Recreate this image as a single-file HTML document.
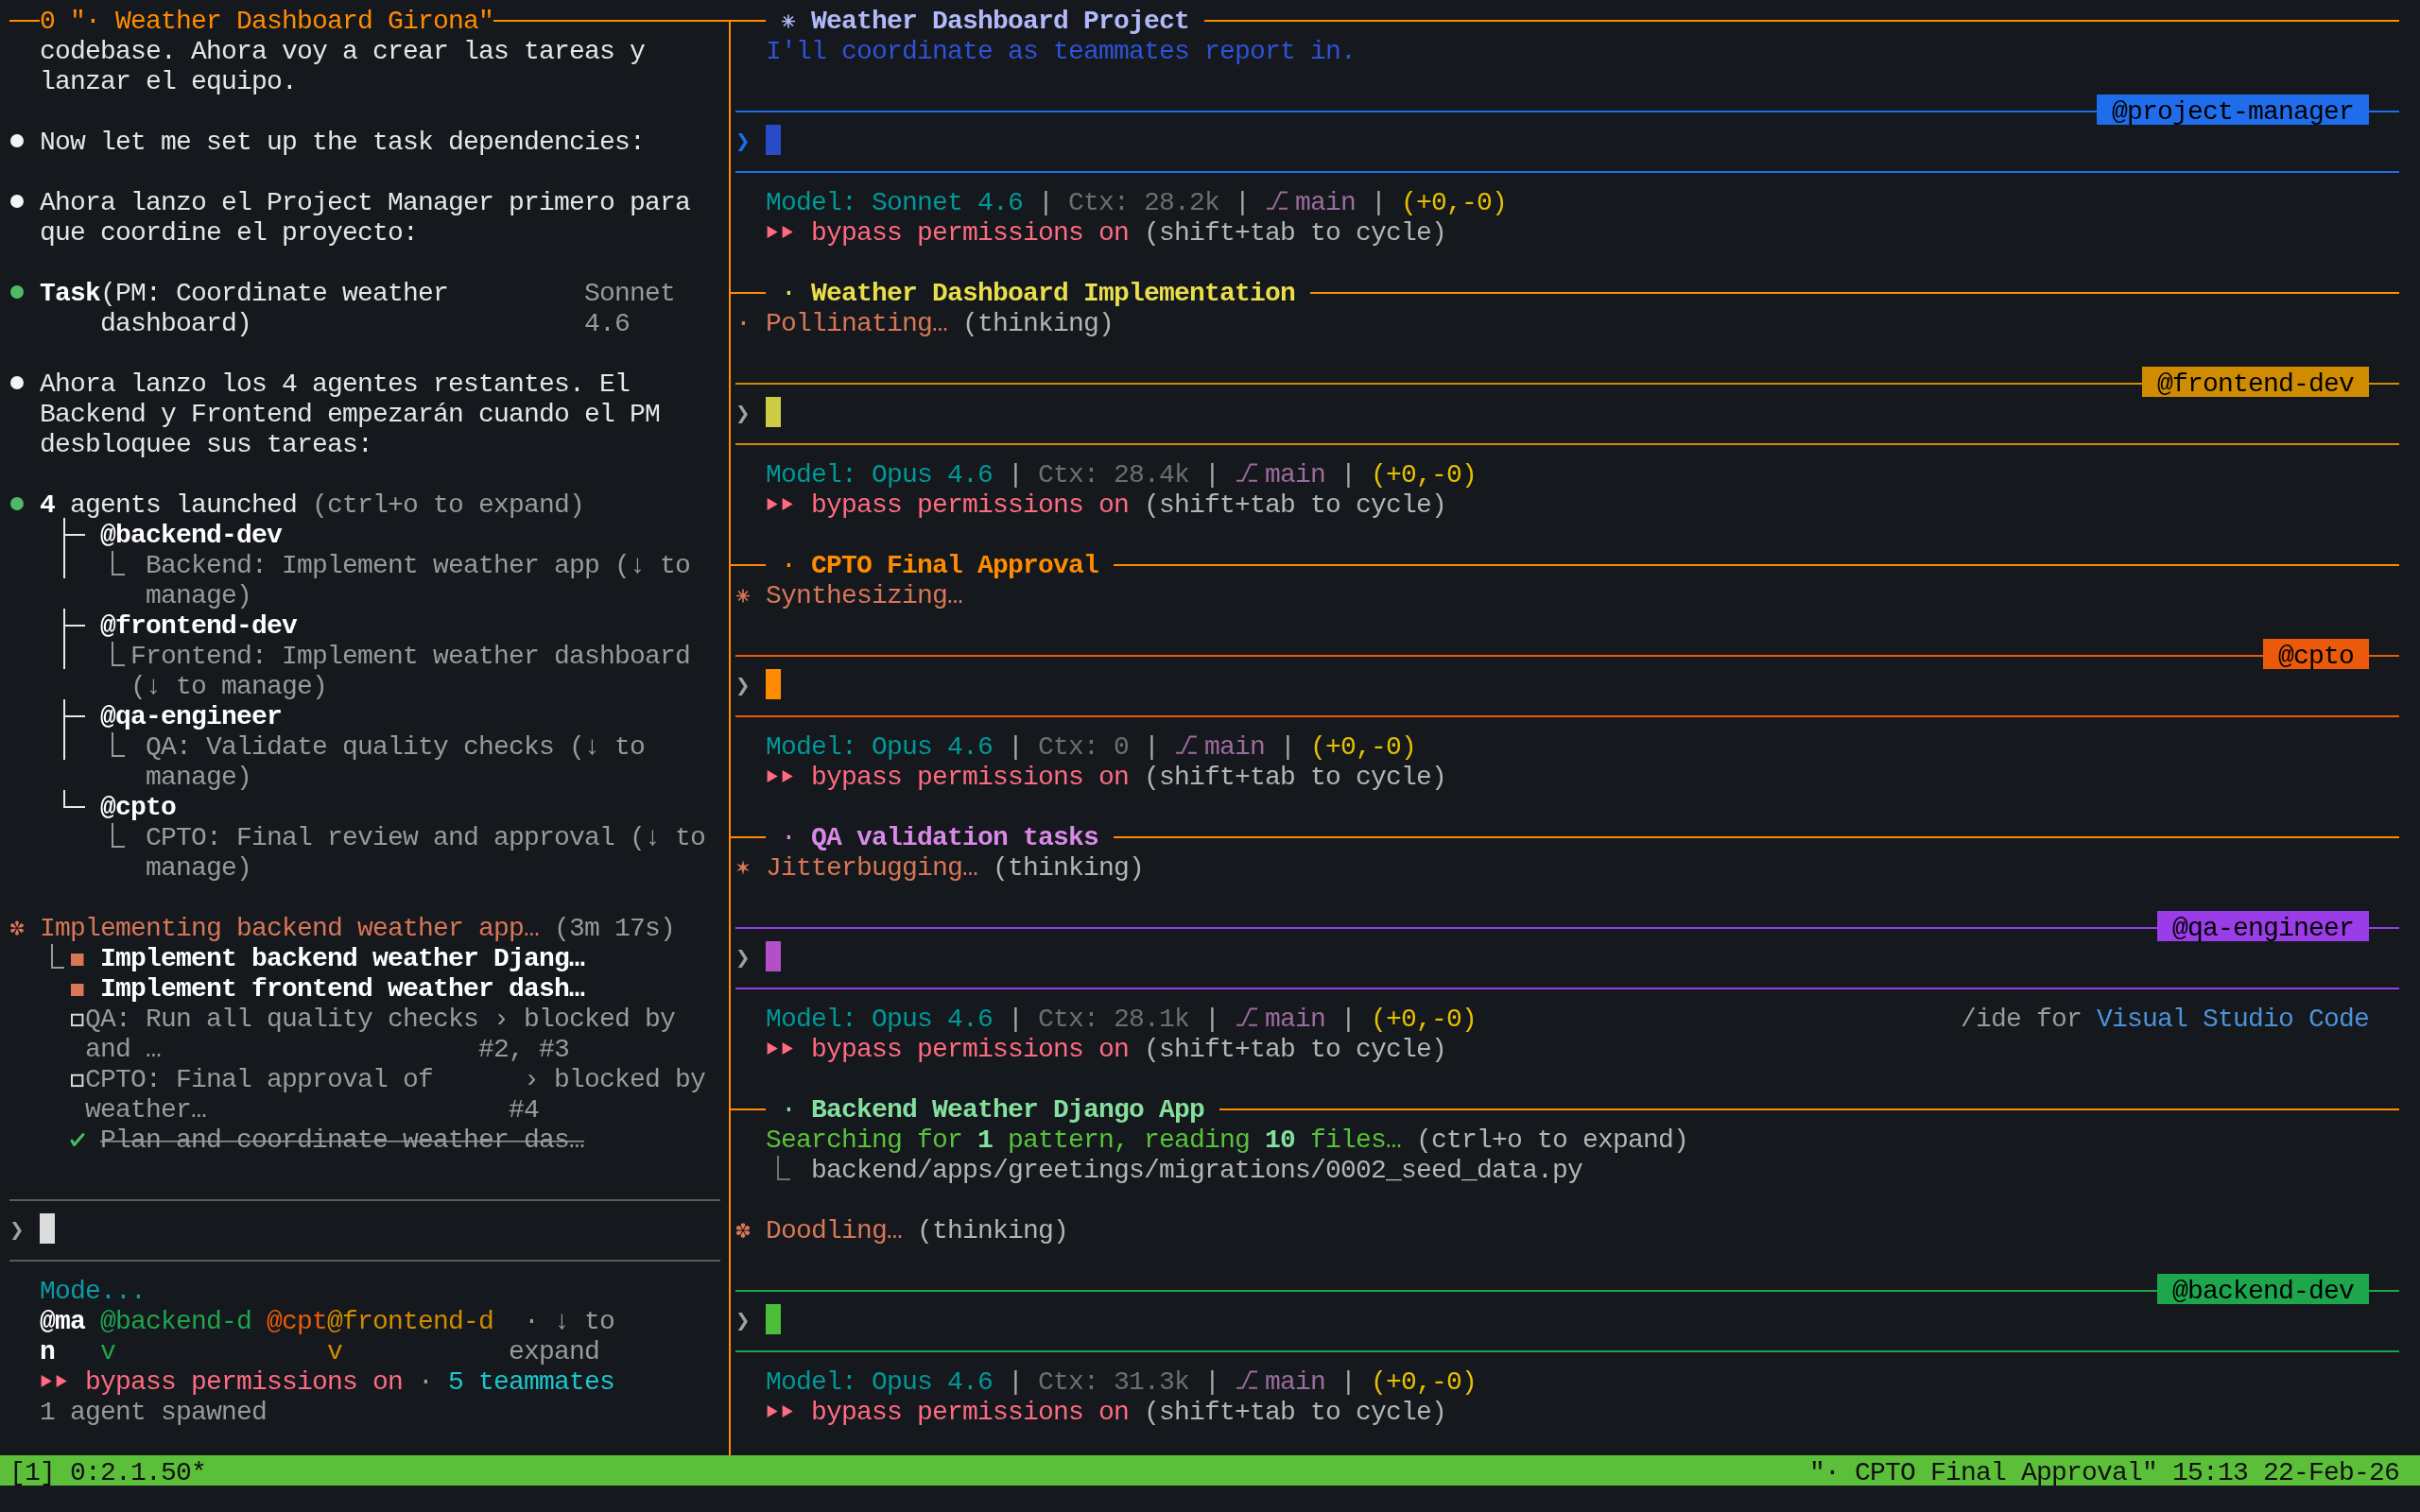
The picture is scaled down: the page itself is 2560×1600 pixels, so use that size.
<!DOCTYPE html><html><head><meta charset="utf-8"><style>
html,body{margin:0;padding:0;background:#15181d;width:2560px;height:1600px;overflow:hidden}
.t{position:absolute;white-space:pre;font-family:"Liberation Mono",monospace;font-size:28px;line-height:32px;letter-spacing:-0.803px;height:32px}
.b{font-weight:bold}
svg{position:absolute;left:0;top:0}
#tx{position:absolute;left:0;top:0;width:2560px;height:1600px;will-change:transform}
</style></head><body>
<svg width="2560" height="1600"><rect x="0" y="1540" width="2560" height="32" fill="#5bbf3a"/><rect x="2218" y="100" width="288" height="32" fill="#1f6deb"/><rect x="2266" y="388" width="240" height="32" fill="#d08c00"/><rect x="2394" y="676" width="112" height="32" fill="#eb5a0a"/><rect x="2282" y="964" width="224" height="32" fill="#9a3ce8"/><rect x="2282" y="1348" width="224" height="32" fill="#1ea64c"/></svg>
<div id="tx">
<div class="t" style="left:42px;top:6.5px;color:#ff8c00">0 &quot;· Weather Dashboard Girona&quot;</div>
<div class="t" style="left:42px;top:38.5px;color:#e6e6e6">codebase. Ahora voy a crear las tareas y</div>
<div class="t" style="left:42px;top:70.5px;color:#e6e6e6">lanzar el equipo.</div>
<div class="t" style="left:42px;top:134.5px;color:#e6e6e6">Now let me set up the task dependencies:</div>
<div class="t" style="left:42px;top:198.5px;color:#e6e6e6">Ahora lanzo el Project Manager primero para</div>
<div class="t" style="left:42px;top:230.5px;color:#e6e6e6">que coordine el proyecto:</div>
<div class="t b" style="left:42px;top:294.5px;color:#ffffff">Task</div>
<div class="t" style="left:106px;top:294.5px;color:#e6e6e6">(PM: Coordinate weather</div>
<div class="t" style="left:618px;top:294.5px;color:#999999">Sonnet</div>
<div class="t" style="left:106px;top:326.5px;color:#e6e6e6">dashboard)</div>
<div class="t" style="left:618px;top:326.5px;color:#999999">4.6</div>
<div class="t" style="left:42px;top:390.5px;color:#e6e6e6">Ahora lanzo los 4 agentes restantes. El</div>
<div class="t" style="left:42px;top:422.5px;color:#e6e6e6">Backend y Frontend empezarán cuando el PM</div>
<div class="t" style="left:42px;top:454.5px;color:#e6e6e6">desbloquee sus tareas:</div>
<div class="t b" style="left:42px;top:518.5px;color:#ffffff">4</div>
<div class="t" style="left:74px;top:518.5px;color:#e6e6e6">agents launched</div>
<div class="t" style="left:330px;top:518.5px;color:#999999">(ctrl+o to expand)</div>
<div class="t b" style="left:106px;top:550.5px;color:#ffffff">@backend-dev</div>
<div class="t" style="left:154px;top:582.5px;color:#999999">Backend: Implement weather app (↓ to</div>
<div class="t" style="left:154px;top:614.5px;color:#999999">manage)</div>
<div class="t b" style="left:106px;top:646.5px;color:#ffffff">@frontend-dev</div>
<div class="t" style="left:138px;top:678.5px;color:#999999">Frontend: Implement weather dashboard</div>
<div class="t" style="left:138px;top:710.5px;color:#999999">(↓ to manage)</div>
<div class="t b" style="left:106px;top:742.5px;color:#ffffff">@qa-engineer</div>
<div class="t" style="left:154px;top:774.5px;color:#999999">QA: Validate quality checks (↓ to</div>
<div class="t" style="left:154px;top:806.5px;color:#999999">manage)</div>
<div class="t b" style="left:106px;top:838.5px;color:#ffffff">@cpto</div>
<div class="t" style="left:154px;top:870.5px;color:#999999">CPTO: Final review and approval (↓ to</div>
<div class="t" style="left:154px;top:902.5px;color:#999999">manage)</div>
<div class="t" style="left:42px;top:966.5px;color:#d77757">Implementing backend weather app…</div>
<div class="t" style="left:586px;top:966.5px;color:#999999">(3m 17s)</div>
<div class="t b" style="left:106px;top:998.5px;color:#ffffff">Implement backend weather Djang…</div>
<div class="t b" style="left:106px;top:1030.5px;color:#ffffff">Implement frontend weather dash…</div>
<div class="t" style="left:90px;top:1062.5px;color:#999999">QA: Run all quality checks</div>
<div class="t" style="left:522px;top:1062.5px;color:#999999">›</div>
<div class="t" style="left:554px;top:1062.5px;color:#999999">blocked by</div>
<div class="t" style="left:90px;top:1094.5px;color:#999999">and …</div>
<div class="t" style="left:506px;top:1094.5px;color:#999999">#2, #3</div>
<div class="t" style="left:90px;top:1126.5px;color:#999999">CPTO: Final approval of</div>
<div class="t" style="left:554px;top:1126.5px;color:#999999">›</div>
<div class="t" style="left:586px;top:1126.5px;color:#999999">blocked by</div>
<div class="t" style="left:90px;top:1158.5px;color:#999999">weather…</div>
<div class="t" style="left:538px;top:1158.5px;color:#999999">#4</div>
<div class="t" style="left:106px;top:1190.5px;color:#999999">Plan and coordinate weather das…</div>
<div class="t" style="left:42px;top:1350.5px;color:#0e9aa4">Mode...</div>
<div class="t b" style="left:42px;top:1382.5px;color:#ffffff">@ma</div>
<div class="t" style="left:106px;top:1382.5px;color:#1ea64c">@backend-d</div>
<div class="t" style="left:282px;top:1382.5px;color:#eb5a0a">@cpt</div>
<div class="t" style="left:346px;top:1382.5px;color:#d08c00">@frontend-d</div>
<div class="t" style="left:554px;top:1382.5px;color:#999999">·</div>
<div class="t" style="left:586px;top:1382.5px;color:#999999">↓</div>
<div class="t" style="left:618px;top:1382.5px;color:#999999">to</div>
<div class="t b" style="left:42px;top:1414.5px;color:#ffffff">n</div>
<div class="t" style="left:106px;top:1414.5px;color:#1ea64c">v</div>
<div class="t" style="left:346px;top:1414.5px;color:#d08c00">v</div>
<div class="t" style="left:538px;top:1414.5px;color:#999999">expand</div>
<div class="t" style="left:90px;top:1446.5px;color:#ff6b80">bypass permissions on</div>
<div class="t" style="left:442px;top:1446.5px;color:#999999">·</div>
<div class="t" style="left:474px;top:1446.5px;color:#1cc6cf">5 teammates</div>
<div class="t" style="left:42px;top:1478.5px;color:#999999">1 agent spawned</div>
<div class="t" style="left:10px;top:1542.5px;color:#111111">[1] 0:2.1.50*</div>
<div class="t" style="left:1914px;top:1542.5px;color:#111111">&quot;· CPTO Final Approval&quot; 15:13 22-Feb-26</div>
<div class="t b" style="left:858px;top:6.5px;color:#b1b9f9">Weather Dashboard Project</div>
<div class="t" style="left:810px;top:38.5px;color:#2f52d8">I&#x27;ll coordinate as teammates report in.</div>
<div class="t" style="left:2234px;top:102.5px;color:#000000">@project-manager</div>
<div class="t" style="left:810px;top:198.5px;color:#009898">Model: Sonnet 4.6</div>
<div class="t" style="left:1098px;top:198.5px;color:#a8a8a8">|</div>
<div class="t" style="left:1130px;top:198.5px;color:#6e6e6e">Ctx: 28.2k</div>
<div class="t" style="left:1306px;top:198.5px;color:#a8a8a8">|</div>
<div class="t" style="left:1370px;top:198.5px;color:#9b6c9e">main</div>
<div class="t" style="left:1450px;top:198.5px;color:#a8a8a8">|</div>
<div class="t" style="left:1482px;top:198.5px;color:#e5c000">(+0,-0)</div>
<div class="t" style="left:858px;top:230.5px;color:#ff6b80">bypass permissions on</div>
<div class="t" style="left:1210px;top:230.5px;color:#b4b4b4">(shift+tab to cycle)</div>
<div class="t" style="left:826px;top:294.5px;color:#e8df4a">·</div>
<div class="t b" style="left:858px;top:294.5px;color:#e8df4a">Weather Dashboard Implementation</div>
<div class="t" style="left:778px;top:326.5px;color:#d77757">·</div>
<div class="t" style="left:810px;top:326.5px;color:#d77757">Pollinating…</div>
<div class="t" style="left:1018px;top:326.5px;color:#b4b4b4">(thinking)</div>
<div class="t" style="left:2282px;top:390.5px;color:#000000">@frontend-dev</div>
<div class="t" style="left:810px;top:486.5px;color:#009898">Model: Opus 4.6</div>
<div class="t" style="left:1066px;top:486.5px;color:#a8a8a8">|</div>
<div class="t" style="left:1098px;top:486.5px;color:#6e6e6e">Ctx: 28.4k</div>
<div class="t" style="left:1274px;top:486.5px;color:#a8a8a8">|</div>
<div class="t" style="left:1338px;top:486.5px;color:#9b6c9e">main</div>
<div class="t" style="left:1418px;top:486.5px;color:#a8a8a8">|</div>
<div class="t" style="left:1450px;top:486.5px;color:#e5c000">(+0,-0)</div>
<div class="t" style="left:858px;top:518.5px;color:#ff6b80">bypass permissions on</div>
<div class="t" style="left:1210px;top:518.5px;color:#b4b4b4">(shift+tab to cycle)</div>
<div class="t" style="left:826px;top:582.5px;color:#ff8c00">·</div>
<div class="t b" style="left:858px;top:582.5px;color:#ff8c00">CPTO Final Approval</div>
<div class="t" style="left:810px;top:614.5px;color:#d77757">Synthesizing…</div>
<div class="t" style="left:2410px;top:678.5px;color:#000000">@cpto</div>
<div class="t" style="left:810px;top:774.5px;color:#009898">Model: Opus 4.6</div>
<div class="t" style="left:1066px;top:774.5px;color:#a8a8a8">|</div>
<div class="t" style="left:1098px;top:774.5px;color:#6e6e6e">Ctx: 0</div>
<div class="t" style="left:1210px;top:774.5px;color:#a8a8a8">|</div>
<div class="t" style="left:1274px;top:774.5px;color:#9b6c9e">main</div>
<div class="t" style="left:1354px;top:774.5px;color:#a8a8a8">|</div>
<div class="t" style="left:1386px;top:774.5px;color:#e5c000">(+0,-0)</div>
<div class="t" style="left:858px;top:806.5px;color:#ff6b80">bypass permissions on</div>
<div class="t" style="left:1210px;top:806.5px;color:#b4b4b4">(shift+tab to cycle)</div>
<div class="t" style="left:826px;top:870.5px;color:#d98ae6">·</div>
<div class="t b" style="left:858px;top:870.5px;color:#d98ae6">QA validation tasks</div>
<div class="t" style="left:810px;top:902.5px;color:#d77757">Jitterbugging…</div>
<div class="t" style="left:1050px;top:902.5px;color:#b4b4b4">(thinking)</div>
<div class="t" style="left:2298px;top:966.5px;color:#000000">@qa-engineer</div>
<div class="t" style="left:810px;top:1062.5px;color:#009898">Model: Opus 4.6</div>
<div class="t" style="left:1066px;top:1062.5px;color:#a8a8a8">|</div>
<div class="t" style="left:1098px;top:1062.5px;color:#6e6e6e">Ctx: 28.1k</div>
<div class="t" style="left:1274px;top:1062.5px;color:#a8a8a8">|</div>
<div class="t" style="left:1338px;top:1062.5px;color:#9b6c9e">main</div>
<div class="t" style="left:1418px;top:1062.5px;color:#a8a8a8">|</div>
<div class="t" style="left:1450px;top:1062.5px;color:#e5c000">(+0,-0)</div>
<div class="t" style="left:858px;top:1094.5px;color:#ff6b80">bypass permissions on</div>
<div class="t" style="left:1210px;top:1094.5px;color:#b4b4b4">(shift+tab to cycle)</div>
<div class="t" style="left:2074px;top:1062.5px;color:#999999">/ide for</div>
<div class="t" style="left:2218px;top:1062.5px;color:#4b92d9">Visual Studio Code</div>
<div class="t" style="left:826px;top:1158.5px;color:#84e09c">·</div>
<div class="t b" style="left:858px;top:1158.5px;color:#84e09c">Backend Weather Django App</div>
<div class="t" style="left:810px;top:1190.5px;color:#58c23a">Searching for</div>
<div class="t b" style="left:1034px;top:1190.5px;color:#84e09c">1</div>
<div class="t" style="left:1066px;top:1190.5px;color:#58c23a">pattern, reading</div>
<div class="t b" style="left:1338px;top:1190.5px;color:#84e09c">10</div>
<div class="t" style="left:1386px;top:1190.5px;color:#58c23a">files…</div>
<div class="t" style="left:1498px;top:1190.5px;color:#b4b4b4">(ctrl+o to expand)</div>
<div class="t" style="left:858px;top:1222.5px;color:#b4b4b4">backend/apps/greetings/migrations/0002_seed_data.py</div>
<div class="t" style="left:810px;top:1286.5px;color:#d77757">Doodling…</div>
<div class="t" style="left:970px;top:1286.5px;color:#b4b4b4">(thinking)</div>
<div class="t" style="left:2298px;top:1350.5px;color:#000000">@backend-dev</div>
<div class="t" style="left:810px;top:1446.5px;color:#009898">Model: Opus 4.6</div>
<div class="t" style="left:1066px;top:1446.5px;color:#a8a8a8">|</div>
<div class="t" style="left:1098px;top:1446.5px;color:#6e6e6e">Ctx: 31.3k</div>
<div class="t" style="left:1274px;top:1446.5px;color:#a8a8a8">|</div>
<div class="t" style="left:1338px;top:1446.5px;color:#9b6c9e">main</div>
<div class="t" style="left:1418px;top:1446.5px;color:#a8a8a8">|</div>
<div class="t" style="left:1450px;top:1446.5px;color:#e5c000">(+0,-0)</div>
<div class="t" style="left:858px;top:1478.5px;color:#ff6b80">bypass permissions on</div>
<div class="t" style="left:1210px;top:1478.5px;color:#b4b4b4">(shift+tab to cycle)</div>
</div>
<svg width="2560" height="1600"><rect x="10" y="21" width="32" height="2" fill="#ff8c00"/><rect x="522" y="21" width="288" height="2" fill="#ff8c00"/><circle cx="18" cy="149" r="7" fill="#f4f4f4"/><circle cx="18" cy="213" r="7" fill="#f4f4f4"/><circle cx="18" cy="309" r="7" fill="#4eba65"/><circle cx="18" cy="405" r="7" fill="#f4f4f4"/><circle cx="18" cy="533" r="7" fill="#4eba65"/><rect x="67" y="548" width="2" height="32" fill="#e6e6e6"/><rect x="67" y="565" width="23" height="2" fill="#e6e6e6"/><rect x="67" y="580" width="2" height="32" fill="#e6e6e6"/><rect x="118" y="583" width="2" height="26" fill="#999999"/><rect x="118" y="607" width="14" height="2" fill="#999999"/><rect x="67" y="644" width="2" height="32" fill="#e6e6e6"/><rect x="67" y="661" width="23" height="2" fill="#e6e6e6"/><rect x="67" y="676" width="2" height="32" fill="#e6e6e6"/><rect x="118" y="679" width="2" height="26" fill="#999999"/><rect x="118" y="703" width="14" height="2" fill="#999999"/><rect x="67" y="740" width="2" height="32" fill="#e6e6e6"/><rect x="67" y="757" width="23" height="2" fill="#e6e6e6"/><rect x="67" y="772" width="2" height="32" fill="#e6e6e6"/><rect x="118" y="775" width="2" height="26" fill="#999999"/><rect x="118" y="799" width="14" height="2" fill="#999999"/><rect x="67" y="836" width="2" height="19" fill="#e6e6e6"/><rect x="67" y="853" width="23" height="2" fill="#e6e6e6"/><rect x="118" y="871" width="2" height="26" fill="#999999"/><rect x="118" y="895" width="14" height="2" fill="#999999"/><path d="M0 -0.8 C-0.5 -2.2 -1.9 -4.6 -1.9 -6 C-1.9 -8.1 1.9 -8.1 1.9 -6 C1.9 -4.6 0.5 -2.2 0 -0.8 Z" transform="translate(18,982) rotate(0)" fill="#d77757"/><path d="M0 -0.8 C-0.5 -2.2 -1.9 -4.6 -1.9 -6 C-1.9 -8.1 1.9 -8.1 1.9 -6 C1.9 -4.6 0.5 -2.2 0 -0.8 Z" transform="translate(18,982) rotate(60)" fill="#d77757"/><path d="M0 -0.8 C-0.5 -2.2 -1.9 -4.6 -1.9 -6 C-1.9 -8.1 1.9 -8.1 1.9 -6 C1.9 -4.6 0.5 -2.2 0 -0.8 Z" transform="translate(18,982) rotate(120)" fill="#d77757"/><path d="M0 -0.8 C-0.5 -2.2 -1.9 -4.6 -1.9 -6 C-1.9 -8.1 1.9 -8.1 1.9 -6 C1.9 -4.6 0.5 -2.2 0 -0.8 Z" transform="translate(18,982) rotate(180)" fill="#d77757"/><path d="M0 -0.8 C-0.5 -2.2 -1.9 -4.6 -1.9 -6 C-1.9 -8.1 1.9 -8.1 1.9 -6 C1.9 -4.6 0.5 -2.2 0 -0.8 Z" transform="translate(18,982) rotate(240)" fill="#d77757"/><path d="M0 -0.8 C-0.5 -2.2 -1.9 -4.6 -1.9 -6 C-1.9 -8.1 1.9 -8.1 1.9 -6 C1.9 -4.6 0.5 -2.2 0 -0.8 Z" transform="translate(18,982) rotate(300)" fill="#d77757"/><rect x="54" y="999" width="2" height="26" fill="#999999"/><rect x="54" y="1023" width="14" height="2" fill="#999999"/><rect x="75" y="1009" width="13.5" height="13" fill="#d77757"/><rect x="75" y="1041" width="13.5" height="13" fill="#d77757"/><rect x="76" y="1073.7" width="11.4" height="11.4" fill="none" stroke="#d8d8d8" stroke-width="2"/><rect x="76" y="1137.7" width="11.4" height="11.4" fill="none" stroke="#d8d8d8" stroke-width="2"/><path d="M76 1207 L78.5 1211.5 L88 1200.5" stroke="#4eba65" stroke-width="3" fill="none" stroke-linecap="round" stroke-linejoin="round"/><rect x="106" y="1207" width="512" height="1.5" fill="#999999"/><rect x="10" y="1269" width="752" height="2" fill="#5a5a5a"/><polygon points="12.8,1293.0 16.8,1293.0 22.9,1302.6 16.8,1312.0 12.8,1312.0 18.9,1302.6" fill="#a0a0a0"/><rect x="42" y="1284" width="16" height="32" fill="#dcdcdc"/><rect x="10" y="1333" width="752" height="2" fill="#5a5a5a"/><polygon points="43.6,1455 54.7,1461.5 43.6,1468" fill="#ff6b80"/><polygon points="59.6,1455 70.7,1461.5 59.6,1468" fill="#ff6b80"/><rect x="771" y="21" width="2" height="1519" fill="#ff8c00"/><path d="M827.00 22.50 L841.00 22.50 M829.05 17.55 L838.95 27.45 M834.00 15.50 L834.00 29.50 M838.95 17.55 L829.05 27.45 " stroke="#b1b9f9" stroke-width="1.6" fill="none"/><rect x="1274" y="21" width="1264" height="2" fill="#ff8c00"/><rect x="778" y="117" width="1440" height="2" fill="#1f6deb"/><rect x="2506" y="117" width="32" height="2" fill="#1f6deb"/><polygon points="780.8,141.0 784.8,141.0 790.9,150.6 784.8,160.0 780.8,160.0 786.9,150.6" fill="#1a6ff0"/><rect x="810" y="132" width="16" height="32" fill="#2a4bc8"/><rect x="778" y="181" width="1760" height="2" fill="#1f6deb"/><path d="M1340 220.8 H1346.6 L1354.8 203.4 H1362 M1353 220.8 H1362" stroke="#9b6c9e" stroke-width="2" fill="none"/><polygon points="811.6,239 822.7,245.5 811.6,252" fill="#ff6b80"/><polygon points="827.6,239 838.7,245.5 827.6,252" fill="#ff6b80"/><rect x="771" y="309" width="39" height="2" fill="#ff8c00"/><rect x="1386" y="309" width="1152" height="2" fill="#ff8c00"/><rect x="778" y="405" width="1488" height="2" fill="#d08c00"/><rect x="2506" y="405" width="32" height="2" fill="#d08c00"/><polygon points="780.8,429.0 784.8,429.0 790.9,438.6 784.8,448.0 780.8,448.0 786.9,438.6" fill="#a0a0a0"/><rect x="810" y="420" width="16" height="32" fill="#cccc44"/><rect x="778" y="469" width="1760" height="2" fill="#d08c00"/><path d="M1308 508.8 H1314.6 L1322.8 491.4 H1330 M1321 508.8 H1330" stroke="#9b6c9e" stroke-width="2" fill="none"/><polygon points="811.6,527 822.7,533.5 811.6,540" fill="#ff6b80"/><polygon points="827.6,527 838.7,533.5 827.6,540" fill="#ff6b80"/><rect x="771" y="597" width="39" height="2" fill="#ff8c00"/><rect x="1178" y="597" width="1360" height="2" fill="#ff8c00"/><path d="M779.00 630.50 L793.00 630.50 M781.05 625.55 L790.95 635.45 M786.00 623.50 L786.00 637.50 M790.95 625.55 L781.05 635.45 " stroke="#d77757" stroke-width="1.6" fill="none"/><rect x="778" y="693" width="1616" height="2" fill="#eb5a0a"/><rect x="2506" y="693" width="32" height="2" fill="#eb5a0a"/><polygon points="780.8,717.0 784.8,717.0 790.9,726.6 784.8,736.0 780.8,736.0 786.9,726.6" fill="#a0a0a0"/><rect x="810" y="708" width="16" height="32" fill="#ff8c00"/><rect x="778" y="757" width="1760" height="2" fill="#eb5a0a"/><path d="M1244 796.8 H1250.6 L1258.8 779.4 H1266 M1257 796.8 H1266" stroke="#9b6c9e" stroke-width="2" fill="none"/><polygon points="811.6,815 822.7,821.5 811.6,828" fill="#ff6b80"/><polygon points="827.6,815 838.7,821.5 827.6,828" fill="#ff6b80"/><rect x="771" y="885" width="39" height="2" fill="#ff8c00"/><rect x="1178" y="885" width="1360" height="2" fill="#ff8c00"/><polygon points="786.00,910.00 787.30,915.75 792.93,914.00 788.60,918.00 792.93,922.00 787.30,920.25 786.00,926.00 784.70,920.25 779.07,922.00 783.40,918.00 779.07,914.00 784.70,915.75" fill="#d77757"/><rect x="778" y="981" width="1504" height="2" fill="#9a3ce8"/><rect x="2506" y="981" width="32" height="2" fill="#9a3ce8"/><polygon points="780.8,1005.0 784.8,1005.0 790.9,1014.6 784.8,1024.0 780.8,1024.0 786.9,1014.6" fill="#a0a0a0"/><rect x="810" y="996" width="16" height="32" fill="#b44fc8"/><rect x="778" y="1045" width="1760" height="2" fill="#9a3ce8"/><path d="M1308 1084.8 H1314.6 L1322.8 1067.4 H1330 M1321 1084.8 H1330" stroke="#9b6c9e" stroke-width="2" fill="none"/><polygon points="811.6,1103 822.7,1109.5 811.6,1116" fill="#ff6b80"/><polygon points="827.6,1103 838.7,1109.5 827.6,1116" fill="#ff6b80"/><rect x="771" y="1173" width="39" height="2" fill="#ff8c00"/><rect x="1290" y="1173" width="1248" height="2" fill="#ff8c00"/><rect x="822" y="1223" width="2" height="26" fill="#707070"/><rect x="822" y="1247" width="14" height="2" fill="#707070"/><path d="M0 -1.0 C-0.5 -2.2 -2.4 -4.0 -2.3 -5.7 C-2.2 -8.4 2.2 -8.4 2.3 -5.7 C2.4 -4.0 0.5 -2.2 0 -1.0 Z" transform="translate(786,1302) rotate(0)" fill="#d77757"/><path d="M0 -1.0 C-0.5 -2.2 -2.4 -4.0 -2.3 -5.7 C-2.2 -8.4 2.2 -8.4 2.3 -5.7 C2.4 -4.0 0.5 -2.2 0 -1.0 Z" transform="translate(786,1302) rotate(60)" fill="#d77757"/><path d="M0 -1.0 C-0.5 -2.2 -2.4 -4.0 -2.3 -5.7 C-2.2 -8.4 2.2 -8.4 2.3 -5.7 C2.4 -4.0 0.5 -2.2 0 -1.0 Z" transform="translate(786,1302) rotate(120)" fill="#d77757"/><path d="M0 -1.0 C-0.5 -2.2 -2.4 -4.0 -2.3 -5.7 C-2.2 -8.4 2.2 -8.4 2.3 -5.7 C2.4 -4.0 0.5 -2.2 0 -1.0 Z" transform="translate(786,1302) rotate(180)" fill="#d77757"/><path d="M0 -1.0 C-0.5 -2.2 -2.4 -4.0 -2.3 -5.7 C-2.2 -8.4 2.2 -8.4 2.3 -5.7 C2.4 -4.0 0.5 -2.2 0 -1.0 Z" transform="translate(786,1302) rotate(240)" fill="#d77757"/><path d="M0 -1.0 C-0.5 -2.2 -2.4 -4.0 -2.3 -5.7 C-2.2 -8.4 2.2 -8.4 2.3 -5.7 C2.4 -4.0 0.5 -2.2 0 -1.0 Z" transform="translate(786,1302) rotate(300)" fill="#d77757"/><rect x="778" y="1365" width="1504" height="2" fill="#1ea64c"/><rect x="2506" y="1365" width="32" height="2" fill="#1ea64c"/><polygon points="780.8,1389.0 784.8,1389.0 790.9,1398.6 784.8,1408.0 780.8,1408.0 786.9,1398.6" fill="#a0a0a0"/><rect x="810" y="1380" width="16" height="32" fill="#4cbe3a"/><rect x="778" y="1429" width="1760" height="2" fill="#1ea64c"/><path d="M1308 1468.8 H1314.6 L1322.8 1451.4 H1330 M1321 1468.8 H1330" stroke="#9b6c9e" stroke-width="2" fill="none"/><polygon points="811.6,1487 822.7,1493.5 811.6,1500" fill="#ff6b80"/><polygon points="827.6,1487 838.7,1493.5 827.6,1500" fill="#ff6b80"/></svg>
</body></html>
